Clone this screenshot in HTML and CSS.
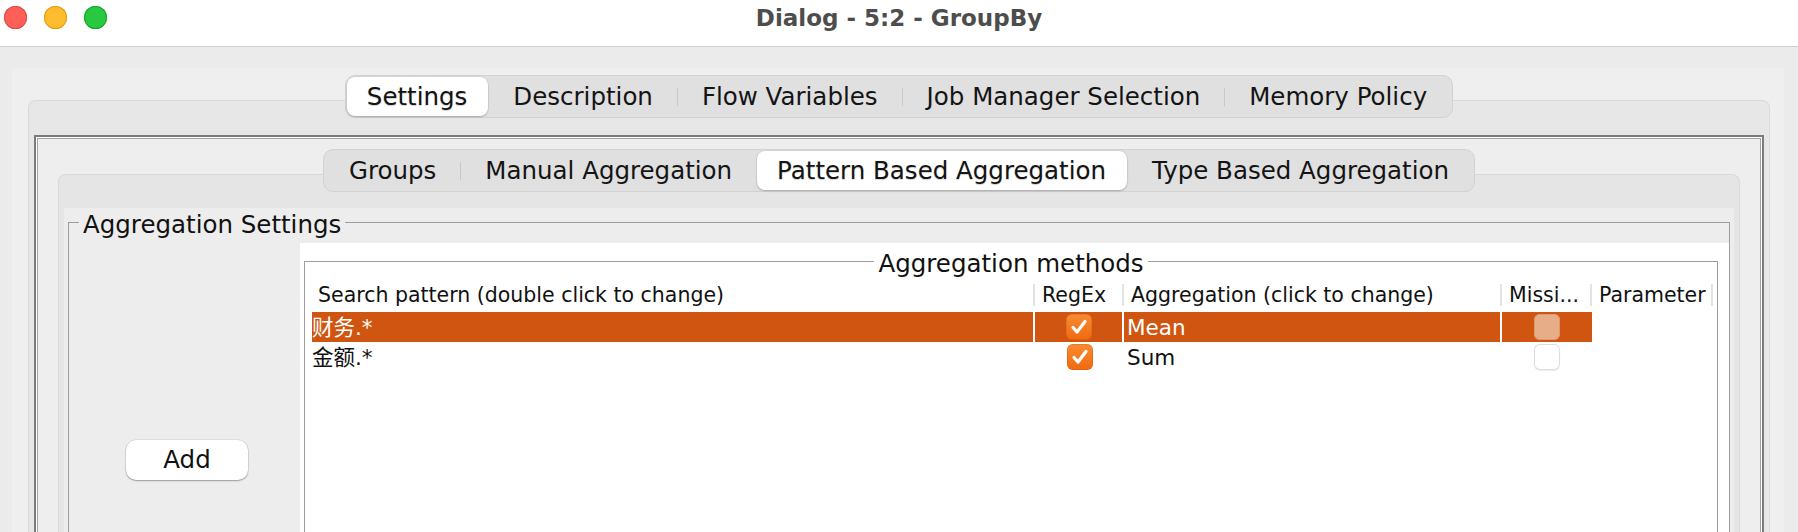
FILE: index.html
```html
<!DOCTYPE html>
<html lang="en">
<head>
<meta charset="utf-8">
<title>Dialog - 5:2 - GroupBy</title>
<link rel="stylesheet" href="styles.css">
</head>
<body>
<div class="window">
  <header class="titlebar">
    <div class="lights">
      <span class="light red"></span>
      <span class="light yellow"></span>
      <span class="light green"></span>
    </div>
    <div class="title">Dialog - 5:2 - GroupBy</div>
    <div></div>
  </header>
  <main class="content">
    <div class="sheet">
      <div class="tabpane outer">
        <nav class="tabbar">
          <span class="tab active">Settings</span>
          <span class="sep hidden"></span>
          <span class="tab">Description</span>
          <span class="sep"></span>
          <span class="tab">Flow Variables</span>
          <span class="sep"></span>
          <span class="tab">Job Manager Selection</span>
          <span class="sep"></span>
          <span class="tab">Memory Policy</span>
        </nav>
        <div class="tabpanel">
          <div class="etched">
            <div class="tabpane inner">
              <nav class="tabbar">
                <span class="tab">Groups</span>
                <span class="sep"></span>
                <span class="tab">Manual Aggregation</span>
                <span class="sep hidden"></span>
                <span class="tab active">Pattern Based Aggregation</span>
                <span class="sep hidden"></span>
                <span class="tab">Type Based Aggregation</span>
              </nav>
              <div class="tabpanel">
                <div class="panel-body">
                  <section class="titled settings">
                    <div class="titled-head">
                      <span class="tl tl-start"></span>
                      <span class="tt">Aggregation Settings</span>
                      <span class="tl tl-end"></span>
                    </div>
                    <div class="titled-body settings-body">
                      <div class="left-col">
                        <button class="btn" type="button">Add</button>
                      </div>
                      <div class="white-panel">
                        <section class="titled methods">
                          <div class="titled-head">
                            <span class="tl tl-start grow"></span>
                            <span class="tt">Aggregation methods</span>
                            <span class="tl tl-end"></span>
                          </div>
                          <div class="titled-body methods-body">
                            <div class="grid">
                              <div class="th first"><div class="hc">Search pattern (double click to change)</div></div>
                              <div class="th"><div class="hc">RegEx</div></div>
                              <div class="th"><div class="hc">Aggregation (click to change)</div></div>
                              <div class="th"><div class="hc">Missi...</div></div>
                              <div class="th"><div class="hc">Parameter</div></div>

                              <div class="td sel sepr">财务.*</div>
                              <div class="td sel sepr center">
                                <span class="cb on"><svg viewBox="0 0 26 26"><path d="M7 13.5 L11 18 L19 7.5"/></svg></span>
                              </div>
                              <div class="td sel sepr agg">Mean</div>
                              <div class="td sel center"><span class="cb faded"></span></div>
                              <div class="td"></div>

                              <div class="td">金额.*</div>
                              <div class="td center">
                                <span class="cb on"><svg viewBox="0 0 26 26"><path d="M7 13.5 L11 18 L19 7.5"/></svg></span>
                              </div>
                              <div class="td agg">Sum</div>
                              <div class="td center"><span class="cb off"></span></div>
                              <div class="td"></div>
                            </div>
                          </div>
                        </section>
                      </div>
                    </div>
                  </section>
                </div>
              </div>
            </div>
          </div>
        </div>
      </div>
    </div>
  </main>
</div>
</body>
</html>
```

FILE: styles.css
```css
* {
  box-sizing: border-box;
}

html,
body {
  margin: 0;
  height: 532px;
  overflow: hidden;
}

body {
  width: 1798px;
  background: #ebebeb;
  font-family: "DejaVu Sans", "Noto Sans CJK SC", sans-serif;
  color: #111111;
}

/* ---------- title bar ---------- */
.titlebar {
  height: 47px;
  background: #ffffff;
  border-bottom: 1px solid #cdcdcd;
  display: grid;
  grid-template-columns: 1fr auto 1fr;
  align-items: start;
}

.lights {
  display: flex;
  gap: 17px;
  padding: 6px 0 0 4px;
}

.light {
  width: 23px;
  height: 23px;
  border-radius: 50%;
}

.red {
  background: #ff5f57;
  box-shadow: inset 0 0 0 1px #e24b41;
}

.yellow {
  background: #febc2e;
  box-shadow: inset 0 0 0 1px #e1a014;
}

.green {
  background: #28c840;
  box-shadow: inset 0 0 0 1px #15a92b;
}

.title {
  height: 36px;
  line-height: 36px;
  font-size: 23px;
  font-weight: bold;
  color: #4d4d4d;
  white-space: nowrap;
}

/* ---------- window content ---------- */
.content {
  padding: 21px 14px 0 12px;
}

.sheet {
  background: #efefef;
  padding: 7px 14px 0 16px;
  height: 700px;
}

.tabpane {
  display: flex;
  flex-direction: column;
}

.tabbar {
  align-self: center;
  display: flex;
  align-items: center;
  height: 43px;
  padding: 1px;
  border: 1px solid #d2d2d2;
  background: #e0e0e0;
  border-radius: 10px;
  position: relative;
  z-index: 1;
}

.tab {
  height: 39px;
  line-height: 39px;
  padding: 0 24px;
  font-size: 24.5px;
  color: #141414;
  border-radius: 8px;
  white-space: nowrap;
}

.tab.active {
  padding: 0 21px 0 20px;
  background: #ffffff;
  text-shadow: 0 1px 1px rgba(0, 0, 0, 0.18);
  box-shadow: 0 1px 2px rgba(0, 0, 0, 0.22), 0 0 0 0.5px rgba(0, 0, 0, 0.08);
}

.sep {
  width: 1px;
  height: 18px;
  background: #c9c9c9;
}

.sep.hidden {
  background: transparent;
}

.tabpanel {
  margin-top: -18px;
  border: 1px solid #d9d9d9;
  border-bottom: 0;
  border-radius: 8px 8px 0 0;
  background: #e7e7e7;
  flex: 1;
}

.outer > .tabpanel {
  padding: 34px 5px 0 5px;
}

.etched {
  border: 2px solid #7b7b7b;
  border-bottom: 0;
  box-shadow: inset 0 0 0 1px #ffffff, inset 0 0 0 2px #a2a2a2;
  background: #eeeeee;
  padding: 12px 22px 0 22px;
  height: 600px;
}

.inner > .tabpanel {
  padding: 33px 5px 0 5px;
  background: #e5e5e5;
  height: 560px;
}

.panel-body {
  background: #ededed;
  padding: 2px 4px 0 4px;
  height: 100%;
}

/* ---------- titled borders ---------- */
.titled-head {
  display: flex;
  height: 24px;
  font-size: 24.5px;
  white-space: nowrap;
}

.tl {
  height: 12px;
  align-self: flex-end;
  border-top: 1px solid #9d9d9d;
}

.tl-start {
  width: 11px;
  border-left: 1px solid #9d9d9d;
}

.tl-start.grow {
  width: auto;
  flex: 1;
}

.tl-end {
  flex: 1;
  border-right: 1px solid #9d9d9d;
}

.tt {
  align-self: flex-start;
  height: 30px;
  line-height: 30px;
  padding: 0 4px;
  color: #111111;
}

.titled-body {
  border: 1px solid #9d9d9d;
  border-top: 0;
}

.settings-body {
  display: grid;
  grid-template-columns: 231px 1fr;
  padding-top: 9px;
  height: 400px;
}

.left-col {
  display: flex;
  flex-direction: column;
  align-items: center;
  padding: 197px 0 0 5px;
}

.btn {
  width: 122px;
  height: 40px;
  border: 0;
  border-radius: 10px;
  background: #ffffff;
  font-family: "DejaVu Sans", sans-serif;
  font-size: 24.5px;
  line-height: 40px;
  color: #111111;
  padding: 0;
  box-shadow: 0 1px 1.5px rgba(0, 0, 0, 0.3), 0 0 0 0.5px rgba(0, 0, 0, 0.12);
}

.white-panel {
  background: #ffffff;
  padding: 6px 11px 0 4px;
}

.methods-body {
  padding: 9px 0 0 7px;
  height: 300px;
}

/* ---------- table ---------- */
.grid {
  display: grid;
  grid-template-columns: 723px 89px 378px 90px 121px;
  grid-template-rows: 30px 30px 30px;
}

.th {
  height: 30px;
  display: flex;
  align-items: flex-start;
}

.hc {
  flex: 1;
  height: 22px;
  margin-top: 2px;
  line-height: 22px;
  font-size: 20.5px;
  padding-left: 7px;
  border-right: 2px solid #e3e3e3;
  white-space: nowrap;
  overflow: hidden;
}

.th.first .hc {
  padding-left: 6px;
}

.td {
  height: 30px;
  line-height: 31px;
  font-size: 21.5px;
  white-space: nowrap;
  color: #111111;
}

.td.agg {
  padding-left: 3px;
}

.td.center {
  display: flex;
  align-items: center;
  justify-content: center;
}

.td.sel {
  background: #cf5510;
  color: #ffffff;
}

.td.sepr {
  border-right: 2px solid #ffffff;
}

.cb {
  width: 26px;
  height: 26px;
  border-radius: 6px;
  display: block;
}

.cb svg {
  width: 26px;
  height: 26px;
  display: block;
}

.cb svg path {
  fill: none;
  stroke: #ffffff;
  stroke-width: 3.2;
  stroke-linecap: round;
  stroke-linejoin: round;
}

.cb.on {
  background: linear-gradient(#f98b33, #ef6a0f);
  box-shadow: inset 0 0 0 0.5px rgba(180, 70, 0, 0.4);
}

.cb.faded {
  background: #e6ad88;
  box-shadow: inset 0 0 0 1px #dd9a70;
}

.cb.off {
  background: #ffffff;
  box-shadow: inset 0 0 0 1px #dedede, 0 0.5px 1px rgba(0, 0, 0, 0.08);
}
```
